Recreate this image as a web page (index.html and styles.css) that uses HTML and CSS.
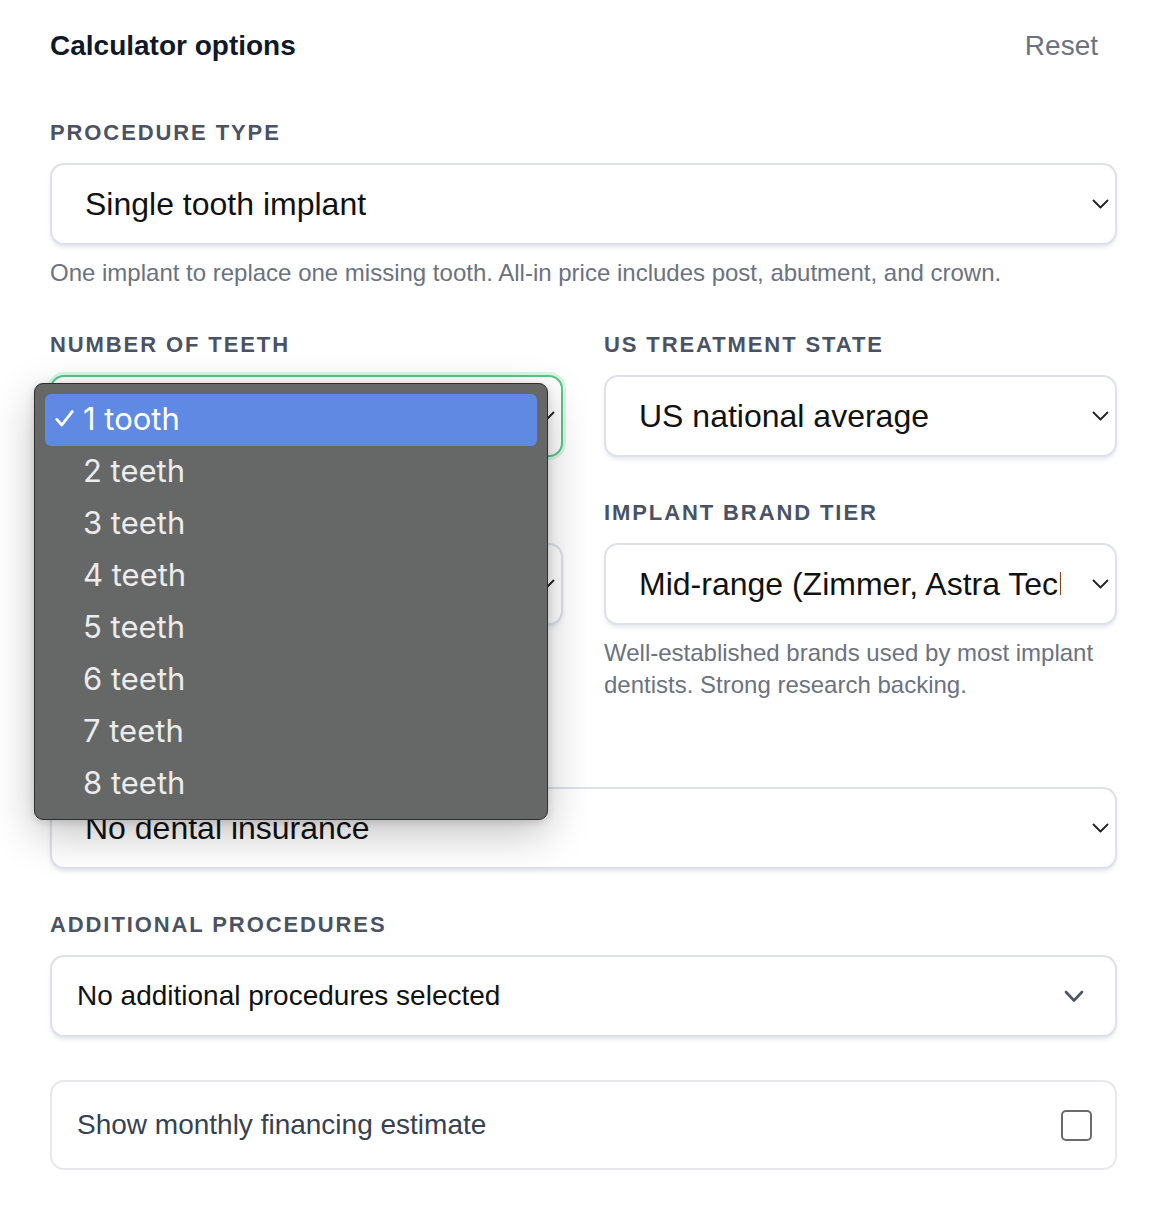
FILE: index.html
```html
<!DOCTYPE html>
<html lang="en">
<head>
<meta charset="utf-8">
<title>Calculator options</title>
<link rel="stylesheet" href="styles.css">
</head>
<body>
<div class="panel">
  <header class="panel-header">
    <h2 class="title">Calculator options</h2>
    <button class="reset" type="button">Reset</button>
  </header>

  <div class="form">
    <div class="field">
      <label class="label">Procedure type</label>
      <button class="select" type="button">
        <span class="value">Single tooth implant</span>
        <svg class="chev" width="17" height="10" viewBox="0 0 17 10"><path d="M1.5 1.5 L8.5 8.5 L15.5 1.5" fill="none" stroke="#222" stroke-width="1.8" stroke-linecap="round" stroke-linejoin="round"/></svg>
      </button>
      <p class="help">One implant to replace one missing tooth. All-in price includes post, abutment, and crown.</p>
    </div>

    <div class="row">
      <div class="col">
        <div class="field field-open">
          <label class="label">Number of teeth</label>
          <button class="select is-focused" type="button" aria-label="1 tooth">
            <span class="value"></span>
            <svg class="chev" width="17" height="10" viewBox="0 0 17 10"><path d="M1.5 1.5 L8.5 8.5 L15.5 1.5" fill="none" stroke="#222" stroke-width="1.8" stroke-linecap="round" stroke-linejoin="round"/></svg>
          </button>
          <ul class="menu" role="listbox">
            <li class="opt is-selected"><span class="check"><svg width="19" height="17" viewBox="0 0 19 17"><path d="M1.8 9.4 L6.8 15 L17.2 1.6" fill="none" stroke="#fff" stroke-width="2.8" stroke-linecap="round" stroke-linejoin="round"/></svg></span>1 tooth</li>
            <li class="opt"><span class="check"></span>2 teeth</li>
            <li class="opt"><span class="check"></span>3 teeth</li>
            <li class="opt"><span class="check"></span>4 teeth</li>
            <li class="opt"><span class="check"></span>5 teeth</li>
            <li class="opt"><span class="check"></span>6 teeth</li>
            <li class="opt"><span class="check"></span>7 teeth</li>
            <li class="opt"><span class="check"></span>8 teeth</li>
          </ul>
        </div>
        <div class="field">
          <label class="label" aria-label="Bone grafting"></label>
          <button class="select" type="button" aria-label="Not needed">
            <span class="value"></span>
            <svg class="chev" width="17" height="10" viewBox="0 0 17 10"><path d="M1.5 1.5 L8.5 8.5 L15.5 1.5" fill="none" stroke="#222" stroke-width="1.8" stroke-linecap="round" stroke-linejoin="round"/></svg>
          </button>
        </div>
      </div>

      <div class="col">
        <div class="field">
          <label class="label">US treatment state</label>
          <button class="select" type="button">
            <span class="value">US national average</span>
            <svg class="chev" width="17" height="10" viewBox="0 0 17 10"><path d="M1.5 1.5 L8.5 8.5 L15.5 1.5" fill="none" stroke="#222" stroke-width="1.8" stroke-linecap="round" stroke-linejoin="round"/></svg>
          </button>
        </div>
        <div class="field">
          <label class="label">Implant brand tier</label>
          <button class="select" type="button">
            <span class="value">Mid-range (Zimmer, Astra Tech)</span>
            <svg class="chev" width="17" height="10" viewBox="0 0 17 10"><path d="M1.5 1.5 L8.5 8.5 L15.5 1.5" fill="none" stroke="#222" stroke-width="1.8" stroke-linecap="round" stroke-linejoin="round"/></svg>
          </button>
          <p class="help">Well-established brands used by most implant dentists. Strong research backing.</p>
        </div>
      </div>
    </div>

    <div class="field">
      <label class="label" aria-label="Dental insurance"></label>
      <button class="select" type="button">
        <span class="value">No dental insurance</span>
        <svg class="chev" width="17" height="10" viewBox="0 0 17 10"><path d="M1.5 1.5 L8.5 8.5 L15.5 1.5" fill="none" stroke="#222" stroke-width="1.8" stroke-linecap="round" stroke-linejoin="round"/></svg>
      </button>
    </div>

    <div class="field">
      <label class="label">Additional procedures</label>
      <button class="select select-multi" type="button">
        <span class="value">No additional procedures selected</span>
        <svg class="chev-lg" width="20" height="13" viewBox="0 0 20 13"><path d="M2 2 L10 10.5 L18 2" fill="none" stroke="#4b5563" stroke-width="2.6" stroke-linecap="round" stroke-linejoin="round"/></svg>
      </button>
    </div>

    <label class="toggle-card">
      <span class="toggle-text">Show monthly financing estimate</span>
      <input class="checkbox" type="checkbox">
    </label>
  </div>
</div>
</body>
</html>
```

FILE: styles.css
```css
html, body {
  margin: 0;
  background: #ffffff;
}

body {
  font-family: "Liberation Sans", Arial, Helvetica, sans-serif;
  color: #111827;
}

.panel {
  padding: 29px 37px 40px 50px;
}

.panel-header {
  display: flex;
  align-items: center;
  justify-content: space-between;
  padding-right: 19px;
}

.title {
  margin: 0;
  font-size: 28px;
  line-height: 34px;
  font-weight: 700;
  color: #111827;
}

.reset {
  font-family: "Liberation Sans", Arial, sans-serif;
  font-size: 28px;
  line-height: 34px;
  color: #6b7280;
  background: none;
  border: 0;
  padding: 0;
}

.form {
  margin-top: 57px;
  display: flex;
  flex-direction: column;
  gap: 43px;
}

.field {
  display: flex;
  flex-direction: column;
  min-width: 0;
}

.field-open {
  position: relative;
}

.label {
  display: block;
  min-height: 26px;
  font-size: 22px;
  line-height: 26px;
  font-weight: 700;
  letter-spacing: 1.9px;
  text-transform: uppercase;
  color: #4a5264;
  margin-bottom: 17px;
}

.select {
  width: 100%;
  height: 82px;
  box-sizing: border-box;
  display: flex;
  align-items: center;
  padding: 0 6px 0 33px;
  border: 2px solid #dfe1ea;
  border-radius: 14px;
  background: #ffffff;
  box-shadow: 0 3px 4px -1px rgba(90, 100, 140, 0.18);
  font-family: "Liberation Sans", Arial, sans-serif;
  font-size: 32px;
  color: #111111;
  text-align: left;
}

.select.is-focused {
  border-color: #5cc489;
  box-shadow: 0 0 0 3px rgba(134, 239, 172, 0.35);
}

.value {
  flex: 1;
  min-width: 0;
  overflow: hidden;
  white-space: nowrap;
}

.chev {
  flex: none;
  margin-left: 31px;
}

.select-multi {
  padding: 0 31px 0 25px;
  font-size: 28px;
}

.chev-lg {
  flex: none;
  margin-left: 20px;
}

.help {
  margin: 12px 0 0;
  font-size: 24px;
  line-height: 32px;
  color: #6b7280;
}

.row {
  display: grid;
  grid-template-columns: minmax(0, 1fr) minmax(0, 1fr);
  column-gap: 41px;
}

.col {
  display: flex;
  flex-direction: column;
  gap: 43px;
  min-width: 0;
}

.menu {
  position: absolute;
  z-index: 10;
  top: 51px;
  left: -16px;
  width: 514px;
  box-sizing: border-box;
  margin: 0;
  padding: 10px 10px 9px;
  list-style: none;
  background: #666767;
  border: 1px solid #2f2f2f;
  border-radius: 9px;
  box-shadow: 0 14px 44px rgba(0, 0, 0, 0.24), 0 2px 8px rgba(0, 0, 0, 0.15);
}

.opt {
  display: flex;
  align-items: center;
  box-sizing: border-box;
  height: 52px;
  padding: 0 0 4px 10px;
  border-radius: 6px;
  font-family: Inter, "Liberation Sans", sans-serif;
  font-size: 31px;
  color: #ececec;
}

.opt.is-selected {
  background: #5f89e3;
  color: #ffffff;
}

.check {
  width: 28px;
  flex: none;
  display: flex;
  align-items: center;
}

.toggle-card {
  height: 90px;
  box-sizing: border-box;
  display: flex;
  align-items: center;
  justify-content: space-between;
  padding: 0 23px 0 25px;
  border: 2px solid #e7e8ec;
  border-radius: 14px;
  background: #ffffff;
}

.toggle-text {
  font-size: 28px;
  color: #374151;
}

.checkbox {
  appearance: none;
  -webkit-appearance: none;
  margin: 0;
  width: 31px;
  height: 31px;
  box-sizing: border-box;
  border: 2px solid #6b6b6b;
  border-radius: 5px;
  background: #ffffff;
}
```
